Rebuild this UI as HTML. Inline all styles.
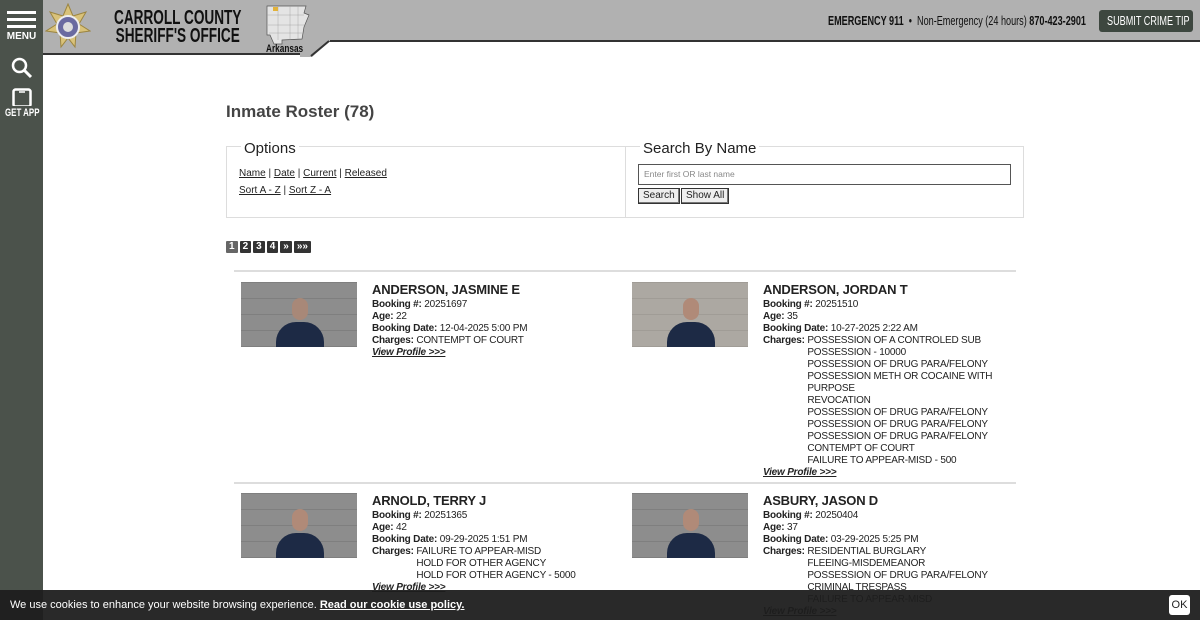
<!DOCTYPE html>
<html><head><meta charset="utf-8"><style>
*{margin:0;padding:0;box-sizing:border-box}
body{width:1200px;height:620px;overflow:hidden;background:#fff;font-family:"Liberation Sans",sans-serif;color:#222;position:relative}
.side{position:absolute;left:0;top:0;width:43px;height:620px;background:#4b524b}
.hdr{position:absolute;left:43px;top:0;width:1157px;height:42px;background:#b1b1b1;border-bottom:2px solid #333}
.hdrl{position:absolute;left:43px;top:0;width:268px;height:55px;background:#b1b1b1;border-bottom:2px solid #333}
.slant{position:absolute;left:300px;top:40px;width:30px;height:17px}
.abs{position:absolute}
.cond{white-space:nowrap;transform-origin:0 0}
.title{left:226px;top:102px;font-size:17px;font-weight:bold;color:#444}
.box{border:1px solid #ddd;top:146px;height:72px}
.box h3{position:absolute;top:-7px;left:14px;background:#fff;font-weight:normal;font-size:15px;padding:0 3px;color:#222}
a{color:#222}
.opt{font-size:10px;line-height:17px}
.pg span{display:inline-block;background:#333;color:#fff;font-size:10px;font-weight:bold;height:12px;line-height:12px;padding:0 3px;margin-right:2px;border-radius:1px}
.hr{height:2px;background:#ddd;left:234px;width:782px}
.ph{width:116px;height:65px;background:#8a8a8a;overflow:hidden}
.ph .wall{position:absolute;inset:0;background:repeating-linear-gradient(0deg,#7f7f7f 0 1px,transparent 1px 16px),#8d8d8d}
.ph .body{position:absolute;left:35px;top:40px;width:48px;height:30px;background:#1d2a45;border-radius:20px 20px 0 0}
.ph .head{position:absolute;left:51px;top:16px;width:16px;height:22px;background:#b08a78;border-radius:8px}
.info{font-size:10px;letter-spacing:-.2px;line-height:12px;color:#222}
.info .n{font-size:13px;font-weight:bold;line-height:16px;margin-bottom:1px}
.info b{font-weight:bold}
.ch{display:flex}.ch div{white-space:nowrap}
.vp{font-weight:bold;font-style:italic;text-decoration:underline}
.cookie{left:0;top:590px;width:1200px;height:30px;background:rgba(30,30,30,.95);color:#fff;font-size:11px;line-height:30px;padding-left:10px}
.cookie u{font-weight:bold}
.ok{position:absolute;right:10px;top:5px;height:20px;width:21px;background:#fff;color:#222;border-radius:3px;font-size:11px;line-height:20px;text-align:center}
</style></head><body>
<div class="side"></div>
<div class="hdr"></div>
<div class="hdrl"></div>
<svg class="slant" viewBox="0 0 30 17"><polygon points="0,0 30,0 30,1 12,17 0,17" fill="#b1b1b1"/><polyline points="11,16 29,1" stroke="#333" stroke-width="2" fill="none"/></svg>
<div class="abs" style="left:7px;top:11px;width:29px;height:3px;background:#fff"></div>
<div class="abs" style="left:7px;top:18px;width:29px;height:3px;background:#fff"></div>
<div class="abs" style="left:7px;top:25px;width:29px;height:3px;background:#fff"></div>
<div class="abs" style="left:0;top:31px;width:43px;text-align:center;color:#fff;font-size:10px;font-weight:bold">MENU</div>
<svg class="abs" style="left:11px;top:57px" width="22" height="22" viewBox="0 0 22 22"><circle cx="8.5" cy="8.5" r="6.5" stroke="#fff" stroke-width="2.5" fill="none"/><line x1="13" y1="13" x2="20" y2="20" stroke="#fff" stroke-width="3"/></svg>
<svg class="abs" style="left:12px;top:88px" width="20" height="18" viewBox="0 0 20 18"><rect x="1.5" y="1.5" width="17" height="17" rx="2" stroke="#fff" stroke-width="2.5" fill="none"/><line x1="7" y1="4" x2="13" y2="4" stroke="#fff" stroke-width="1.5"/></svg>
<div class="abs cond" style="left:5px;top:107px;color:#fff;font-size:11px;font-weight:bold;transform:scaleX(.72)">GET APP</div>
<svg class="abs" style="left:45px;top:3px" width="46" height="46" viewBox="0 0 46 46"><polygon points="23,1 28,13 41,9 34,21 45,28 31,30 30,44 23,35 16,44 15,30 1,28 12,21 5,9 18,13" fill="#d9c27a" stroke="#9c8540"/><circle cx="23" cy="24" r="11" fill="#6a6aa0" stroke="#eee" stroke-width="2"/><circle cx="23" cy="24" r="5" fill="#ddd"/></svg>
<div class="abs cond" style="left:114px;top:9px;font-size:20px;font-weight:bold;line-height:18px;color:#111;transform:scaleX(.68);text-align:center">CARROLL COUNTY<br>SHERIFF'S OFFICE</div>
<svg class="abs" style="left:266px;top:5px" width="44" height="40" viewBox="0 0 44 40"><polygon points="1,1 40,1 38,8 43,10 38,22 36,34 16,35 16,39 8,39 4,30 1,30" fill="#e4e4e4" stroke="#555" stroke-width=".7"/><path d="M1,10 H38 M2,20 H40 M3,28 H36 M12,1 V35 M24,1 V35 M32,1 V34" stroke="#999" stroke-width=".4"/><rect x="7" y="2" width="5" height="4" fill="#e2b23a"/></svg>
<div class="abs cond" style="left:266px;top:43px;font-size:11px;font-weight:bold;color:#111;transform:scaleX(.75)">Arkansas</div>
<div class="abs cond" style="left:828px;top:13px;font-size:13px;color:#111;transform:scaleX(.7)"><b>EMERGENCY 911</b> &nbsp;•&nbsp; Non-Emergency (24 hours) <b>870-423-2901</b></div>
<div class="abs" style="left:1099px;top:10px;width:94px;height:22px;background:#3d473f;border-radius:3px"></div>
<div class="abs cond" style="left:1107px;top:13px;color:#fff;font-size:13px;transform:scaleX(.7)">SUBMIT CRIME TIP</div>
<div class="abs title">Inmate Roster (78)</div>
<div class="abs box" style="left:226px;width:400px"><h3>Options</h3>
<div class="abs opt" style="left:12px;top:18px"><a href="#">Name</a> | <a href="#">Date</a> | <a href="#">Current</a> | <a href="#">Released</a><br><a href="#">Sort A - Z</a> | <a href="#">Sort Z - A</a></div></div>
<div class="abs box" style="left:625px;width:399px"><h3>Search By Name</h3>
<div class="abs" style="left:12px;top:17px;width:373px;height:21px;border:1px solid #555;font-size:8.5px;color:#888;line-height:19px;padding-left:5px">Enter first OR last name</div>
<div class="abs" style="left:12px;top:41px;height:16px;border:1px solid #333;background:#eee;font-size:10px;line-height:14px;padding:0 4px;box-shadow:inset -1px -1px #777">Search</div>
<div class="abs" style="left:55px;top:41px;height:16px;border:1px solid #333;background:#eee;font-size:10px;line-height:14px;padding:0 4px;box-shadow:inset -1px -1px #777">Show All</div></div>
<div class="abs pg" style="left:226px;top:236px"><span style="background:#666">1</span><span>2</span><span>3</span><span>4</span><span>»</span><span>»»</span></div>

<div class="abs hr" style="top:270px"></div>
<div class="abs ph" style="left:241px;top:282px"><div class="wall"></div><div class="body"></div><div class="head" style="background:#a88878"></div></div>
<div class="abs info" style="left:372px;top:282px"><div class="n">ANDERSON, JASMINE E</div><b>Booking #:</b> 20251697<br><b>Age:</b> 22<br><b>Booking Date:</b> 12-04-2025 5:00 PM<br><b>Charges:</b> CONTEMPT OF COURT<br><span class="vp">View Profile &gt;&gt;&gt;</span></div>

<div class="abs ph" style="left:632px;top:282px"><div class="wall" style="background:repeating-linear-gradient(0deg,#a09c96 0 1px,transparent 1px 16px),#aca8a2"></div><div class="body"></div><div class="head"></div></div>
<div class="abs info" style="left:763px;top:282px"><div class="n">ANDERSON, JORDAN T</div><b>Booking #:</b> 20251510<br><b>Age:</b> 35<br><b>Booking Date:</b> 10-27-2025 2:22 AM<br><div class="ch"><b>Charges:&nbsp;</b><div>POSSESSION OF A CONTROLED SUB<br>POSSESSION - 10000<br>POSSESSION OF DRUG PARA/FELONY<br>POSSESSION METH OR COCAINE WITH<br>PURPOSE<br>REVOCATION<br>POSSESSION OF DRUG PARA/FELONY<br>POSSESSION OF DRUG PARA/FELONY<br>POSSESSION OF DRUG PARA/FELONY<br>CONTEMPT OF COURT<br>FAILURE TO APPEAR-MISD - 500</div></div><span class="vp">View Profile &gt;&gt;&gt;</span></div>

<div class="abs hr" style="top:482px"></div>
<div class="abs ph" style="left:241px;top:493px"><div class="wall"></div><div class="body"></div><div class="head"></div></div>
<div class="abs info" style="left:372px;top:493px"><div class="n">ARNOLD, TERRY J</div><b>Booking #:</b> 20251365<br><b>Age:</b> 42<br><b>Booking Date:</b> 09-29-2025 1:51 PM<br><div class="ch"><b>Charges:&nbsp;</b><div>FAILURE TO APPEAR-MISD<br>HOLD FOR OTHER AGENCY<br>HOLD FOR OTHER AGENCY - 5000</div></div><span class="vp">View Profile &gt;&gt;&gt;</span></div>

<div class="abs ph" style="left:632px;top:493px"><div class="wall"></div><div class="body"></div><div class="head"></div></div>
<div class="abs info" style="left:763px;top:493px"><div class="n">ASBURY, JASON D</div><b>Booking #:</b> 20250404<br><b>Age:</b> 37<br><b>Booking Date:</b> 03-29-2025 5:25 PM<br><div class="ch"><b>Charges:&nbsp;</b><div>RESIDENTIAL BURGLARY<br>FLEEING-MISDEMEANOR<br>POSSESSION OF DRUG PARA/FELONY<br>CRIMINAL TRESPASS<br>FAILURE TO APPEAR-MISD</div></div><span class="vp">View Profile &gt;&gt;&gt;</span></div>

<div class="abs cookie">We use cookies to enhance your website browsing experience. <u>Read our cookie use policy.</u><div class="ok">OK</div></div>
</body></html>
